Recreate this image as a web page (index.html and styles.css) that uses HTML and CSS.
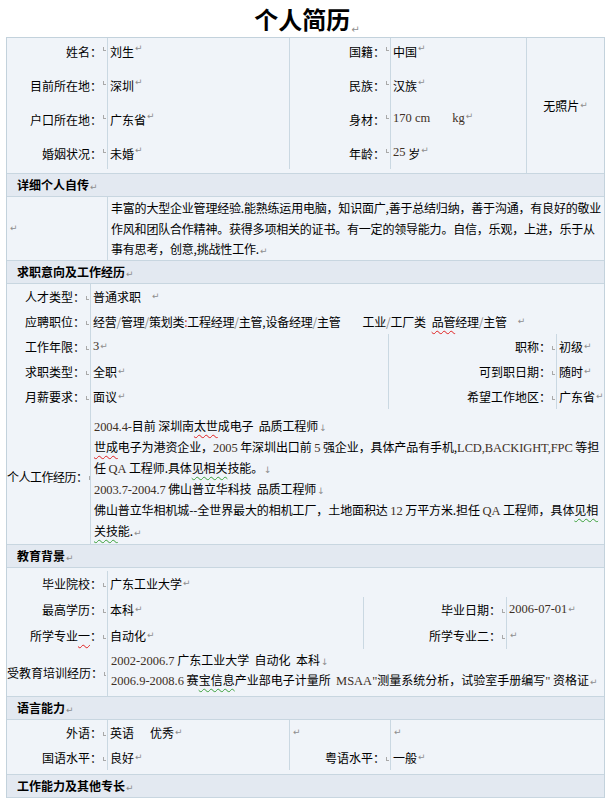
FILE: index.html
```html
<!DOCTYPE html>
<html lang="zh-CN">
<head>
<meta charset="utf-8">
<title>个人简历</title>
<link rel="stylesheet" href="styles.css">
</head>
<body>
<h1 class="title">个人简历<span class="pm">↵</span></h1>
<div class="resume">
  <section class="grid basic">
    <div class="c l">姓名：</div><div class="c v bl">刘生<span class="pm">↵</span></div>
    <div class="c l bl">国籍：</div><div class="c v bl">中国<span class="pm">↵</span></div>
    <div class="c photo bl">无照片<span class="pm">↵</span></div>
    <div class="c l">目前所在地：</div><div class="c v bl">深圳<span class="pm">↵</span></div>
    <div class="c l bl">民族：</div><div class="c v bl">汉族<span class="pm">↵</span></div>
    <div class="c l">户口所在地：</div><div class="c v bl">广东省<span class="pm">↵</span></div>
    <div class="c l bl">身材：</div><div class="c v bl"><span class="n">170 cm</span><span class="gap22"></span><span class="n">kg</span><span class="pm">↵</span></div>
    <div class="c l">婚姻状况：</div><div class="c v bl">未婚<span class="pm">↵</span></div>
    <div class="c l bl">年龄：</div><div class="c v bl"><span class="n">25</span>&nbsp;岁<span class="pm">↵</span></div>
  </section>

  <div class="hd">详细个人自传<span class="pm">↵</span></div>
  <section class="grid intro">
    <div class="c lead"><span class="pm">↵</span></div>
    <div class="para bl">丰富的大型企业管理经验.能熟练运用电脑，知识面广,善于总结归纳，善于沟通，有良好的敬业<br>作风和团队合作精神。获得多项相关的证书。有一定的领导能力。自信，乐观，上进，乐于从<br>事有思考，创意,挑战性工作.<span class="pm">↵</span></div>
  </section>

  <div class="hd">求职意向及工作经历<span class="pm">↵</span></div>
  <section class="grid job">
    <div class="c l">人才类型：</div><div class="c v bl span3">普通求职<span class="gap10"></span><span class="pm">↵</span></div>
    <div class="c l">应聘职位：</div><div class="c v bl span3 tight">经营<span class="sl">/</span>管理<span class="sl">/</span>策划类<span class="red">:</span>工程经理<span class="sl">/</span>主管,设备经理<span class="sl">/</span>主管<span class="gap24"></span>工业<span class="sl">/</span>工厂类<span class="gap6"></span><span class="sp">品管</span>经理<span class="sl">/</span>主管<span class="gap10"></span><span class="pm">↵</span></div>
    <div class="c l">工作年限：</div><div class="c v bl"><span class="n">3</span><span class="pm">↵</span></div>
    <div class="c l bl">职称：</div><div class="c v bl">初级<span class="pm">↵</span></div>
    <div class="c l">求职类型：</div><div class="c v bl">全职<span class="pm">↵</span></div>
    <div class="c l bl">可到职日期：</div><div class="c v bl">随时<span class="pm">↵</span></div>
    <div class="c l">月薪要求：</div><div class="c v bl">面议<span class="pm">↵</span></div>
    <div class="c l bl">希望工作地区：</div><div class="c v bl">广东省<span class="pm">↵</span></div>
    <div class="c l narrow">个人工作经历：</div>
    <div class="exp bl span3"><span class="n">2004.4-</span>目前&nbsp;深圳南<span class="sp">太世</span>成电子&nbsp;&nbsp;品质工程师<span class="lb">↓</span><br><span class="sp">世成</span>电子为港资企业，<span class="n">2005</span> 年深圳出口前 <span class="n">5</span> 强企业，具体产品有手机,<span class="n">LCD,BACKIGHT,FPC</span> 等担<br>任 <span class="n">QA</span> 工程师.具体<span class="gr">见相关</span>技能。<span class="lb">↓</span><br><span class="n">2003.7-2004.7</span> 佛山普立华科技&nbsp;&nbsp;品质工程师<span class="lb">↓</span><br>佛山普立华相机城--全世界最大的相机工厂，土地面积达 <span class="n">12</span> 万平方米.担任 <span class="n">QA</span> 工程师，具体<span class="gr">见相</span><br><span class="gr">关技</span>能.<span class="pm">↵</span></div>
  </section>

  <div class="hd">教育背景<span class="pm">↵</span></div>
  <section class="grid edu">
    <div class="c l">毕业院校：</div><div class="c v bl span3">广东工业大学<span class="pm">↵</span></div>
    <div class="c l">最高学历：</div><div class="c v bl">本科<span class="pm">↵</span></div>
    <div class="c l bl">毕业日期：</div><div class="c v bl"><span class="n">2006-07-01</span><span class="pm">↵</span></div>
    <div class="c l">所学专业<span class="sp">一</span>：</div><div class="c v bl">自动化<span class="pm">↵</span></div>
    <div class="c l bl">所学专业二：</div><div class="c v bl"><span class="pm">↵</span></div>
    <div class="c l">受教育培训经历：</div>
    <div class="train bl span3"><span class="n">2002-2006.7</span> 广东工业大学&nbsp;&nbsp;自动化&nbsp;&nbsp;本科<span class="lb">↓</span><br><span class="n">2006.9-2008.6</span> 赛<span class="gr">宝信息</span>产业部电子计量所&nbsp;&nbsp;<span class="n">MSAA"</span>测量系统分析，试验室手册编写<span class="n">"</span> 资格证<span class="pm">↵</span></div>
  </section>

  <div class="hd">语言能力<span class="pm">↵</span></div>
  <section class="grid lang">
    <div class="c l">外语：</div><div class="c v bl">英语<span class="gap16"></span>优秀<span class="pm">↵</span></div>
    <div class="c v bl"><span class="pm">↵</span></div><div class="c v bl"><span class="pm">↵</span></div>
    <div class="c l">国语水平：</div><div class="c v bl">良好<span class="pm">↵</span></div>
    <div class="c l bl">粤语水平：</div><div class="c v bl">一般<span class="pm">↵</span></div>
  </section>

  <div class="hd">工作能力及其他专长<span class="pm">↵</span></div>
</div>
</body>
</html>
```

FILE: styles.css
```css
* { box-sizing: border-box; }

body {
  margin: 0;
  background: #ffffff;
  color: #000000;
  font-family: "Noto Sans CJK SC", "Noto Sans", sans-serif;
  font-size: 12px;
}

.title {
  margin: 0;
  height: 37px;
  line-height: 37px;
  text-align: center;
  font-size: 24px;
  font-weight: 700;
  padding-left: 6px;
}

.title .pm { font-size: 10px; vertical-align: -4px; }

.resume {
  margin-left: 6px;
  width: 599px;
  border: 1px solid #c3d2dc;
  border-bottom: none;
  background: #f0f4f9;
}

.pm, .lb {
  color: #8e8e8e;
  font-family: "DejaVu Sans", sans-serif;
  font-size: 9px;
  font-weight: 400;
  line-height: 1;
  margin-left: 1px;
}

.hd {
  height: 23px;
  line-height: 22px;
  padding-left: 10px;
  background: #e3e9f1;
  border-bottom: 1px solid #c8d6e0;
  font-weight: 700;
  font-size: 12px;
}

.grid {
  display: grid;
  border-bottom: 1px solid #c8d6e0;
}

.c {
  display: flex;
  align-items: center;
  white-space: nowrap;
}

.l {
  justify-content: flex-end;
  padding-right: 1px;
}

.l::after {
  content: "";
  width: 2px;
  height: 3px;
  margin-left: 1px;
  margin-top: 3px;
  border-left: 1px solid #a9a9a9;
  border-bottom: 1px solid #a9a9a9;
}

.narrow { letter-spacing: -0.5px; padding-right: 0; }
.tight { letter-spacing: -0.25px; }

.v { padding-left: 2px; }

.bl { border-left: 1px solid #cad8e2; }

.span3 { grid-column: span 3; }

.n {
  font-family: "Liberation Serif", serif;
  font-size: 12.5px;
  line-height: 1;
  color: #3d2f25;
}

.sl { color: #8a8a8a; }
.red { color: #c03030; }

.sp {
  text-decoration: underline wavy #e02020;
  text-decoration-thickness: 1px;
  text-underline-offset: 3px;
}

.gr {
  text-decoration: underline wavy #3aa03a;
  text-decoration-thickness: 1px;
  text-underline-offset: 3px;
}

.gap6 { display: inline-block; width: 6px; }
.gap10 { display: inline-block; width: 10px; }
.gap16 { display: inline-block; width: 16px; }
.gap22 { display: inline-block; width: 22px; }
.gap24 { display: inline-block; width: 22px; }

/* basic info */
.basic {
  grid-template-columns: 100px 182px 101px 136px 1fr;
  grid-template-rows: 34px 34px 34px 29px 4px;
}

.basic .c {
  align-items: flex-start;
  padding-top: 6px;
  line-height: 16px;
}

.basic .photo {
  grid-column: 5;
  grid-row: 1 / 6;
  align-items: center;
  justify-content: center;
  padding-top: 0;
}

/* self intro */
.intro {
  grid-template-columns: 100px 1fr;
}

.lead { padding-left: 2px; }

.para {
  padding: 1px 0 0 3px;
  line-height: 20.5px;
  white-space: nowrap;
  letter-spacing: -0.2px;
}

/* job */
.job {
  grid-template-columns: 83px 298px 168px 1fr;
  grid-template-rows: repeat(5, 25px) auto;
}

.exp {
  padding: 6px 0 3px 3px;
  line-height: 21px;
  white-space: nowrap;
  letter-spacing: -0.1px;
}

/* education */
.edu {
  padding-top: 3px;
  grid-template-columns: 100px 256px 143px 1fr;
  grid-template-rows: repeat(3, 26px) auto;
}

.train {
  padding: 1px 0 6px 3px;
  line-height: 20px;
  white-space: nowrap;
}

/* language */
.lang {
  padding-bottom: 4px;
  grid-template-columns: 100px 182px 101px 1fr;
  grid-template-rows: 25px 25px;
}
```
